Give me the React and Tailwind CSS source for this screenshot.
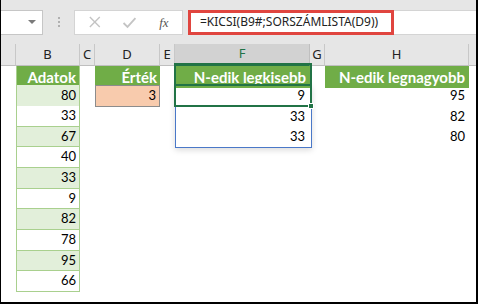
const COLS = "grid grid-cols-[15px_64px_15px_65px_15px_135px_15px_144px_1fr]";

const DATA = [80, 33, 67, 40, 33, 9, 82, 78, 95, 66];
const SMALL = [9, 33, 33];
const LARGE = [95, 82, 80];

const cellFont = { fontFamily: "Lato, 'Liberation Sans', sans-serif" };

function ColHeader({ label, active, last }) {
  return (
    <div
      className={`flex items-center justify-center text-[13px] border-r ${
        active
          ? "bg-[#d2d2d2] text-[#217346] border-b-2 border-b-[#217346] border-r-[#bfbfbf]"
          : "text-[#222] border-b border-b-[#bfbfbf] border-r-[#c8c8c8]"
      } ${last ? "border-r-0" : ""}`}
    >
      {label}
    </div>
  );
}

export default function App() {
  return (
    <div
      className="w-[478px] h-[304px] bg-white border-l border-r-2 border-b-2 border-black overflow-hidden"
      style={{ fontFamily: "'Noto Sans', 'Open Sans', sans-serif" }}
    >
      {/* formula bar */}
      <div className="h-[44px] bg-[#e6e6e6] flex items-center">
        <div className="w-[42px] h-[25px] bg-white border border-l-0 border-[#c6c6c6] flex items-center justify-end pr-[6px]">
          <div className="w-0 h-0 border-l-[4px] border-r-[4px] border-t-[4px] border-l-transparent border-r-transparent border-t-[#7a7a7a]" />
        </div>
        <div className="w-[31px] flex flex-col items-center gap-[2px]">
          <div className="w-[2px] h-[2px] bg-[#b0b0b0]" />
          <div className="w-[2px] h-[2px] bg-[#b0b0b0]" />
          <div className="w-[2px] h-[2px] bg-[#b0b0b0]" />
        </div>
        <div className="w-[109px] h-[25px] bg-white border border-[#d4d4d4] flex items-center">
          <svg width="108" height="23" viewBox="0 0 108 23">
            <path d="M15 6 L25 16 M25 6 L15 16" stroke="#c4c4c4" strokeWidth="1.4" fill="none" />
            <path d="M49 12 L53 16 L61 7" stroke="#c4c4c4" strokeWidth="1.8" fill="none" />
            <text
              x="85"
              y="16"
              fontSize="13"
              fontStyle="italic"
              fill="#555"
              fontFamily="'Liberation Serif', serif"
            >
              fx
            </text>
          </svg>
        </div>
        <div className="ml-[5px] flex-1 h-[25px] bg-white border border-r-0 border-[#d4d4d4] relative">
          <div className="absolute -left-px -top-px w-[206px] h-[25px] border-[3px] border-[#e0453f]" />
          <div className="pl-[11px] h-full flex items-center text-[12px] text-[#222]">
            =KICSI(B9#;SORSZÁMLISTA(D9))
          </div>
        </div>
      </div>

      {/* sheet */}
      <div className="relative">
        <div className={`${COLS} h-[20.67px] bg-[#e6e6e6]`}>
          <ColHeader label="" />
          <ColHeader label="B" />
          <ColHeader label="C" />
          <ColHeader label="D" />
          <ColHeader label="E" />
          <ColHeader label="F" active />
          <ColHeader label="G" />
          <ColHeader label="H" />
          <ColHeader label="" last />
        </div>

        <div className={`${COLS} h-[20.67px] text-[15px] font-bold text-white`} style={cellFont}>
          <div />
          <div className="bg-[#70ad47] border-x border-[#a9d08e] flex items-center justify-end pr-[3px] mt-px">Adatok</div>
          <div />
          <div className="bg-[#70ad47] flex items-center justify-end pr-[3px] mt-px">Érték</div>
          <div />
          <div className="bg-[#70ad47] flex items-center justify-end pr-[4px] mt-px">N-edik legkisebb</div>
          <div />
          <div className="bg-[#70ad47] flex items-center justify-end pr-[4px] mt-px">N-edik legnagyobb</div>
          <div />
        </div>

        {DATA.map((v, i) => (
          <div key={i} className={`${COLS} h-[20.67px] text-[13px] text-black`} style={cellFont}>
            <div />
            <div
              className={`border-x border-b border-[#a9d08e] flex items-center justify-end pr-[3px] ${
                i % 2 === 0 ? "bg-[#e2efda]" : "bg-white"
              }`}
            >
              {v}
            </div>
            <div />
            {i === 0 ? (
              <div className="bg-[#f8cbad] border border-[#8c8c8c] flex items-center justify-end pr-[3px]">3</div>
            ) : (
              <div />
            )}
            <div />
            <div className="flex items-center justify-end pr-[5px]">{SMALL[i] ?? ""}</div>
            <div />
            <div className="flex items-center justify-end pr-[4px]">{LARGE[i] ?? ""}</div>
            <div />
          </div>
        ))}

        {/* spill range */}
        <div className="absolute left-[174px] top-[41px] w-[137px] h-[63px] border border-[#4a78c8] shadow-[0_2px_6px_rgba(0,0,0,0.15)]" />
        {/* selection */}
        <div className="absolute left-[173px] top-[19px] w-[138px] h-[44px] border-2 border-[#217346]" />
        <div className="absolute left-[173px] top-[40px] w-[138px] h-[2px] bg-[#217346]" />
        <div className="absolute left-[307px] top-[59px] w-[6px] h-[6px] bg-[#217346] border border-white" />
      </div>
    </div>
  );
}
